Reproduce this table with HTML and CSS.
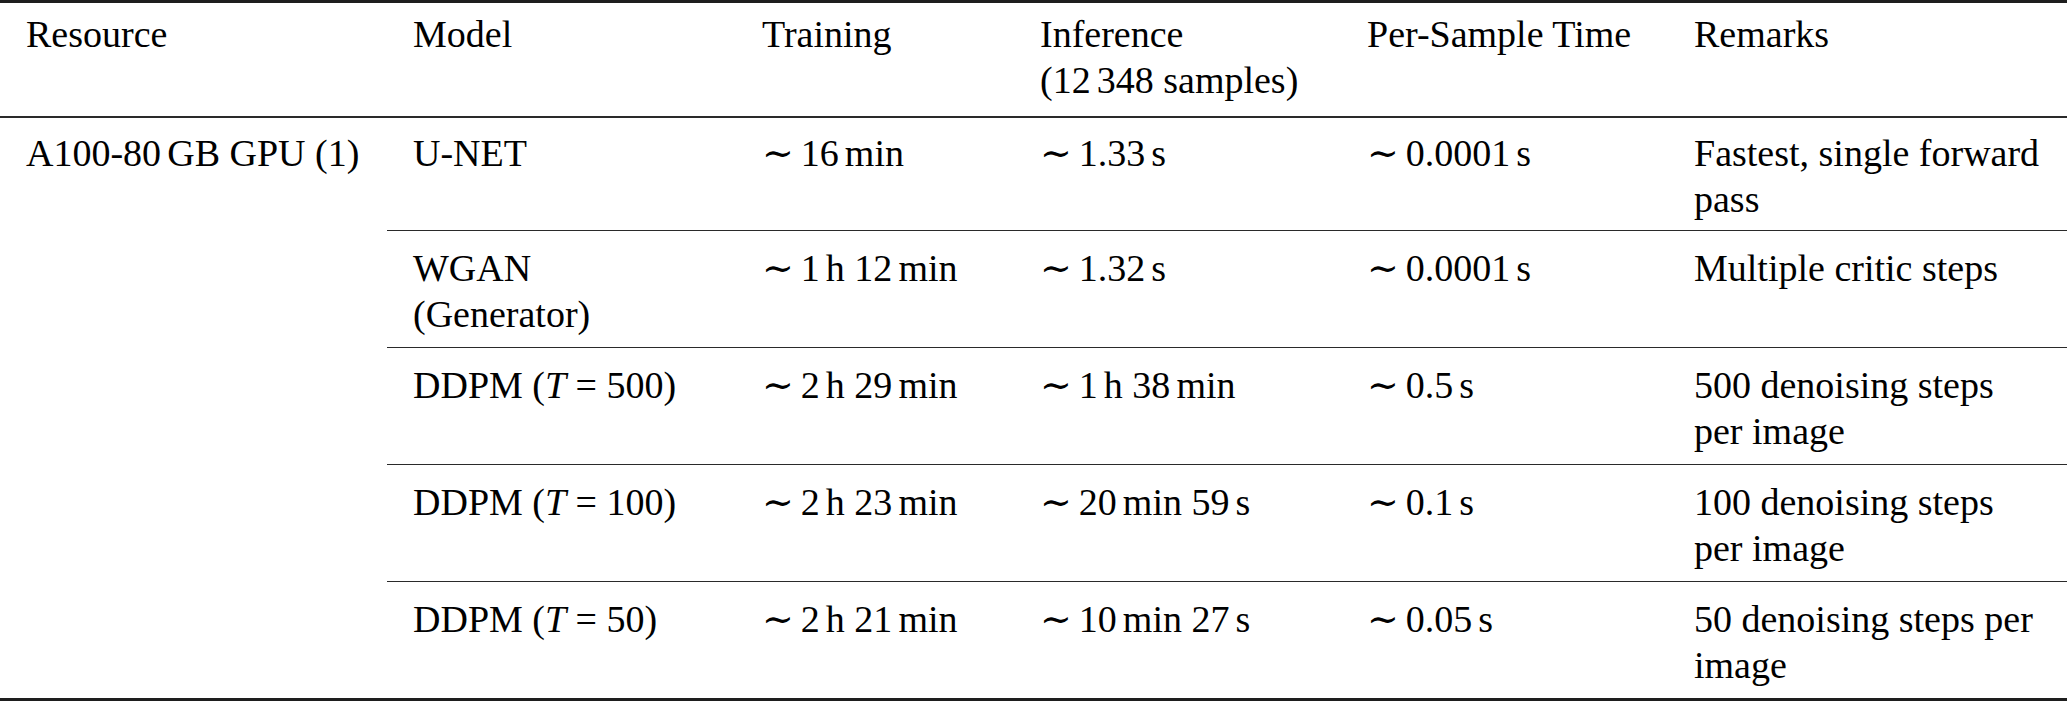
FILE: index.html
```html
<!DOCTYPE html>
<html lang="en">
<head>
<meta charset="utf-8">
<title>Compute cost table</title>
<link rel="stylesheet" href="styles.css">
</head>
<body>
<table class="cost">
  <colgroup>
    <col class="c-res">
    <col class="c-model">
    <col class="c-train">
    <col class="c-inf">
    <col class="c-per">
    <col class="c-rem">
  </colgroup>
  <thead>
    <tr>
      <th>Resource</th>
      <th>Model</th>
      <th>Training</th>
      <th>Inference<br><span class="nw">(12<span class="ts"></span>348 samples)</span></th>
      <th>Per-Sample Time</th>
      <th class="last">Remarks</th>
    </tr>
  </thead>
  <tbody>
    <tr class="lead">
      <td rowspan="5" class="res">A100-80<span class="ts"></span>GB GPU (1)</td>
      <td>U-NET</td>
      <td><span class="sim">∼</span>16<span class="ts"></span>min</td>
      <td><span class="sim">∼</span>1.33<span class="ts"></span>s</td>
      <td><span class="sim">∼</span>0.0001<span class="ts"></span>s</td>
      <td class="last">Fastest, single forward pass</td>
    </tr>
    <tr>
      <td>WGAN (Generator)</td>
      <td><span class="sim">∼</span>1<span class="ts"></span>h 12<span class="ts"></span>min</td>
      <td><span class="sim">∼</span>1.32<span class="ts"></span>s</td>
      <td><span class="sim">∼</span>0.0001<span class="ts"></span>s</td>
      <td class="last">Multiple critic steps</td>
    </tr>
    <tr>
      <td>DDPM (<i>T</i> = 500)</td>
      <td><span class="sim">∼</span>2<span class="ts"></span>h 29<span class="ts"></span>min</td>
      <td><span class="sim">∼</span>1<span class="ts"></span>h 38<span class="ts"></span>min</td>
      <td><span class="sim">∼</span>0.5<span class="ts"></span>s</td>
      <td class="last">500 denoising steps per image</td>
    </tr>
    <tr>
      <td>DDPM (<i>T</i> = 100)</td>
      <td><span class="sim">∼</span>2<span class="ts"></span>h 23<span class="ts"></span>min</td>
      <td><span class="sim">∼</span>20<span class="ts"></span>min 59<span class="ts"></span>s</td>
      <td><span class="sim">∼</span>0.1<span class="ts"></span>s</td>
      <td class="last">100 denoising steps per image</td>
    </tr>
    <tr class="end">
      <td>DDPM (<i>T</i> = 50)</td>
      <td><span class="sim">∼</span>2<span class="ts"></span>h 21<span class="ts"></span>min</td>
      <td><span class="sim">∼</span>10<span class="ts"></span>min 27<span class="ts"></span>s</td>
      <td><span class="sim">∼</span>0.05<span class="ts"></span>s</td>
      <td class="last">50 denoising steps per image</td>
    </tr>
  </tbody>
</table>
</body>
</html>
```

FILE: styles.css
```css
html, body {
  margin: 0;
  padding: 0;
  background: #ffffff;
  overflow: hidden;
}

body {
  width: 2067px;
  height: 706px;
}

.cost {
  width: 2070px;
  table-layout: fixed;
  border-collapse: collapse;
  font-family: "Liberation Serif", "Times New Roman", serif;
  font-size: 38px;
  line-height: 46px;
  color: #000000;
  border-top: 3px solid #1e1e1e;
}

.c-res { width: 387px; }
.c-model { width: 349px; }
.c-train { width: 278px; }
.c-inf { width: 327px; }
.c-per { width: 327px; }
.c-rem { width: 402px; }

.cost th {
  font-weight: normal;
  text-align: left;
  vertical-align: top;
  padding: 8px 26px 13px;
  border-bottom: 2px solid #2a2a2a;
}

.cost td {
  text-align: left;
  vertical-align: top;
  padding: 14px 26px 10px;
  border-bottom: 1.5px solid #2a2a2a;
}

.cost tr.lead td {
  padding-top: 12px;
  padding-bottom: 8px;
}

.cost td.res {
  white-space: nowrap;
  border-bottom: 3px solid #1e1e1e;
}

.cost tr.end td {
  border-bottom: 3px solid #1e1e1e;
}

.nw {
  white-space: nowrap;
}

.ts {
  display: inline-block;
  width: 0.16em;
}

.sim {
  display: inline-block;
  font-family: "Liberation Serif", "DejaVu Serif", serif;
  width: 0.72em;
  margin-right: 0.3em;
  text-align: center;
}

.cost i {
  font-style: italic;
}
```
